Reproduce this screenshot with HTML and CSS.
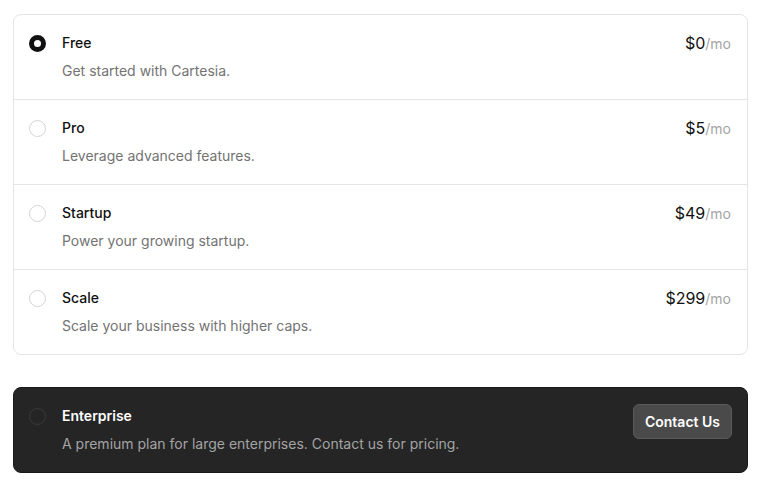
FILE: index.html
```html
<!DOCTYPE html>
<html>
<head>
<meta charset="utf-8">
<link rel="stylesheet" href="styles.css">
</head>
<body>
<div class="page">
  <div class="plans">
    <div class="plan">
      <span class="radio checked"></span>
      <div class="info">
        <div class="title">Free</div>
        <div class="desc">Get started with Cartesia.</div>
      </div>
      <div class="price">$0<span class="per">/mo</span></div>
    </div>
    <div class="plan">
      <span class="radio"></span>
      <div class="info">
        <div class="title">Pro</div>
        <div class="desc">Leverage advanced features.</div>
      </div>
      <div class="price">$5<span class="per">/mo</span></div>
    </div>
    <div class="plan">
      <span class="radio"></span>
      <div class="info">
        <div class="title">Startup</div>
        <div class="desc">Power your growing startup.</div>
      </div>
      <div class="price">$49<span class="per">/mo</span></div>
    </div>
    <div class="plan">
      <span class="radio"></span>
      <div class="info">
        <div class="title">Scale</div>
        <div class="desc">Scale your business with higher caps.</div>
      </div>
      <div class="price">$299<span class="per">/mo</span></div>
    </div>
  </div>
  <div class="enterprise">
    <span class="radio dark"></span>
    <div class="info">
      <div class="title">Enterprise</div>
      <div class="desc">A premium plan for large enterprises. Contact us for pricing.</div>
    </div>
    <button class="contact">Contact Us</button>
  </div>
</div>
</body>
</html>
```
FILE: styles.css
```css
* { box-sizing: border-box; }
body {
  margin: 0;
  background: #ffffff;
  font-family: Inter, "Noto Sans", sans-serif;
  color: #111111;
}
.page {
  padding: 14px 18px 0 13px;
  display: flex;
  flex-direction: column;
  gap: 32px;
}
.plans {
  border: 1px solid #e5e5e5;
  border-radius: 8px;
  display: flex;
  flex-direction: column;
}
.plan {
  display: flex;
  align-items: flex-start;
  padding: 18px 16px 18px 15px;
  border-bottom: 1px solid #e5e5e5;
}
.plan:last-child { border-bottom: none; }
.radio {
  width: 17px;
  height: 17px;
  border-radius: 50%;
  border: 1px solid #d4d4d4;
  flex: none;
  margin-top: 2px;
  margin-right: 16px;
  background: #fff;
}
.radio.checked {
  border: 5px solid #111111;
}
.radio.dark {
  background: transparent;
  border-color: #3b3b3b;
}
.info {
  flex: 1;
  display: flex;
  flex-direction: column;
  gap: 8px;
}
.title {
  font-size: 14px;
  font-weight: 500;
  line-height: 20px;
}
.desc {
  font-size: 14px;
  line-height: 20px;
  color: #737373;
}
.price {
  font-size: 16px;
  line-height: 20px;
  color: #111;
}
.per {
  font-size: 14px;
  color: #a3a3a3;
}
.enterprise {
  background: #252525;
  border-radius: 8px;
  border: 1px solid #1a1a1a;
  display: flex;
  align-items: flex-start;
  padding: 18px 15px 18px 15px;
}
.enterprise .title {
  color: #ffffff;
  font-weight: 600;
}
.enterprise .desc {
  color: #a3a3a3;
}
.contact {
  font-family: Inter, "Noto Sans", sans-serif;
  font-size: 14px;
  font-weight: 600;
  color: #ffffff;
  background: #4a4a4a;
  border: 1px solid #5a5a5a;
  border-radius: 6px;
  width: 99px;
  height: 35px;
  margin-top: -2px;
  padding: 0;
}
```
